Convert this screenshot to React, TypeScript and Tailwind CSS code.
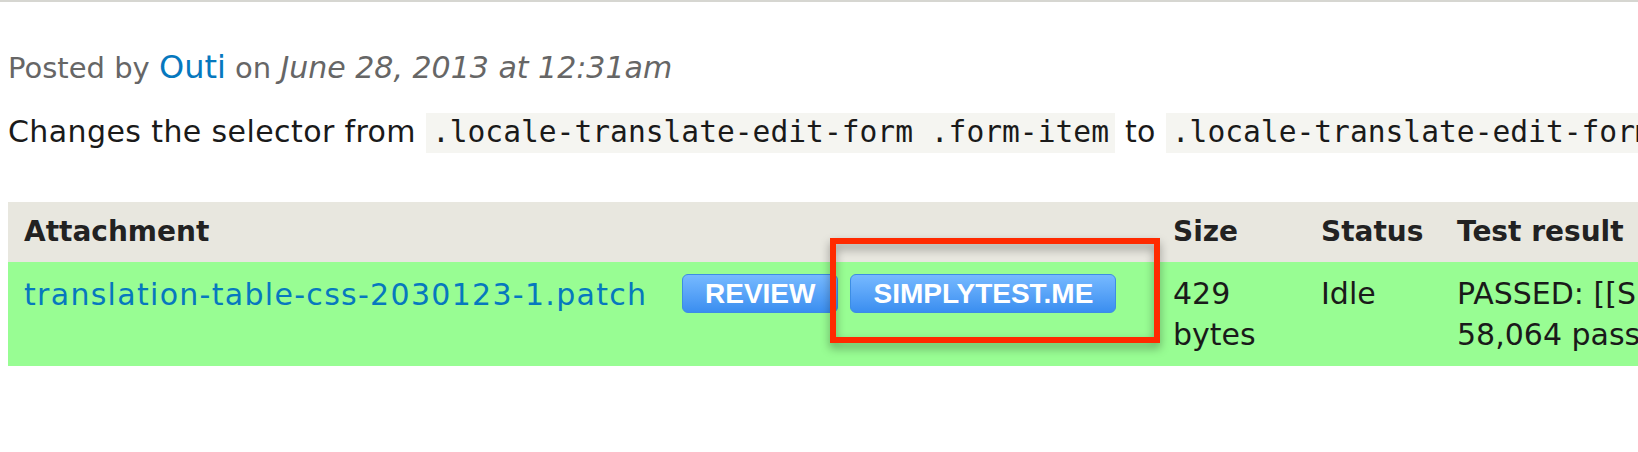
function PatchButton({ label }: { label: string }) {
  return (
    <span className="inline-flex h-[39px] shrink-0 items-center rounded-[6px] border border-[#3d8de4] bg-linear-to-b from-[#76b9ff] to-[#3a8ef0] px-[22px] font-['Liberation_Sans',Arial,sans-serif] text-[28px] font-bold leading-[37px] text-white">
      {label}
    </span>
  );
}

export default function App() {
  return (
    <div className="relative h-[452px] w-[1638px] overflow-hidden bg-white font-['DejaVu_Sans',sans-serif] text-[#1a1a1a]">
      <div className="h-[2px] bg-[#d6d6d1]" />

      <div className="w-[2400px] px-[8px]">
        {/* submitted line */}
        <p className="mt-[45px] whitespace-nowrap text-[29px] leading-[40px] text-[#666]">
          Posted by <a className="text-[32px] text-[#0678be]">Outi</a> on{" "}
          <em className="text-[30px]">June 28, 2013 at 12:31am</em>
        </p>

        <p className="mt-[22px] whitespace-nowrap text-[30px] leading-[44px] tracking-[0.4px]">
          Changes the selector from{" "}
          <code className="bg-[#f5f5f1] px-[6px] pt-[2px] pb-[4px] font-['DejaVu_Sans_Mono',monospace] text-[29.6px] tracking-normal">
            .locale-translate-edit-form .form-item
          </code>{" "}
          to{" "}
          <code className="bg-[#f5f5f1] px-[6px] pt-[2px] pb-[4px] font-['DejaVu_Sans_Mono',monospace] text-[29.6px] tracking-normal">
            .locale-translate-edit-form td .form-item
          </code>
          .
        </p>

        {/* attachments table */}
        <table className="mt-[48px] w-[2233px] table-fixed border-collapse">
          <colgroup>
            <col className="w-[1149px]" />
            <col className="w-[148px]" />
            <col className="w-[136px]" />
            <col className="w-[800px]" />
          </colgroup>
          <thead>
            <tr className="bg-[#e8e7df] text-[28px] font-bold leading-[34px] text-[#222]">
              <th className="pt-[13px] pb-[13px] pl-[16px] text-left">Attachment</th>
              <th className="pt-[13px] pb-[13px] pl-[16px] text-left">Size</th>
              <th className="pt-[13px] pb-[13px] pl-[16px] text-left">Status</th>
              <th className="pt-[13px] pb-[13px] pl-[16px] text-left">Test result</th>
            </tr>
          </thead>
          <tbody>
            <tr className="bg-[#98fd93] text-[30px] leading-[41px]">
              <td className="pt-[12px] pb-[4px] pl-[16px] align-top">
                <div className="flex items-start">
                  <div className="w-[658px] shrink-0 whitespace-nowrap">
                    <a className="tracking-[1.3px] text-[#0678be]">translation-table-css-2030123-1.patch</a>
                  </div>
                  <div className="flex gap-[12px]">
                    <PatchButton label="REVIEW" />
                    <PatchButton label="SIMPLYTEST.ME" />
                  </div>
                </div>
              </td>
              <td className="pt-[11px] pb-[11px] pl-[16px] align-top">
                429
                <br />
                bytes
              </td>
              <td className="pt-[11px] pb-[11px] pl-[16px] align-top">Idle</td>
              <td className="whitespace-nowrap pt-[11px] pb-[11px] pl-[16px] align-top">
                PASSED: [[SimpleTest]]: [MySQL]
                <br />
                58,064 pass(es).
              </td>
            </tr>
          </tbody>
        </table>
      </div>

      {/* annotation box */}
      <div className="absolute left-[830px] top-[238px] h-[105px] w-[330px] border-[6px] border-[#ff2a00] drop-shadow-[0_5px_5px_rgba(0,0,0,0.35)]" />
    </div>
  );
}
